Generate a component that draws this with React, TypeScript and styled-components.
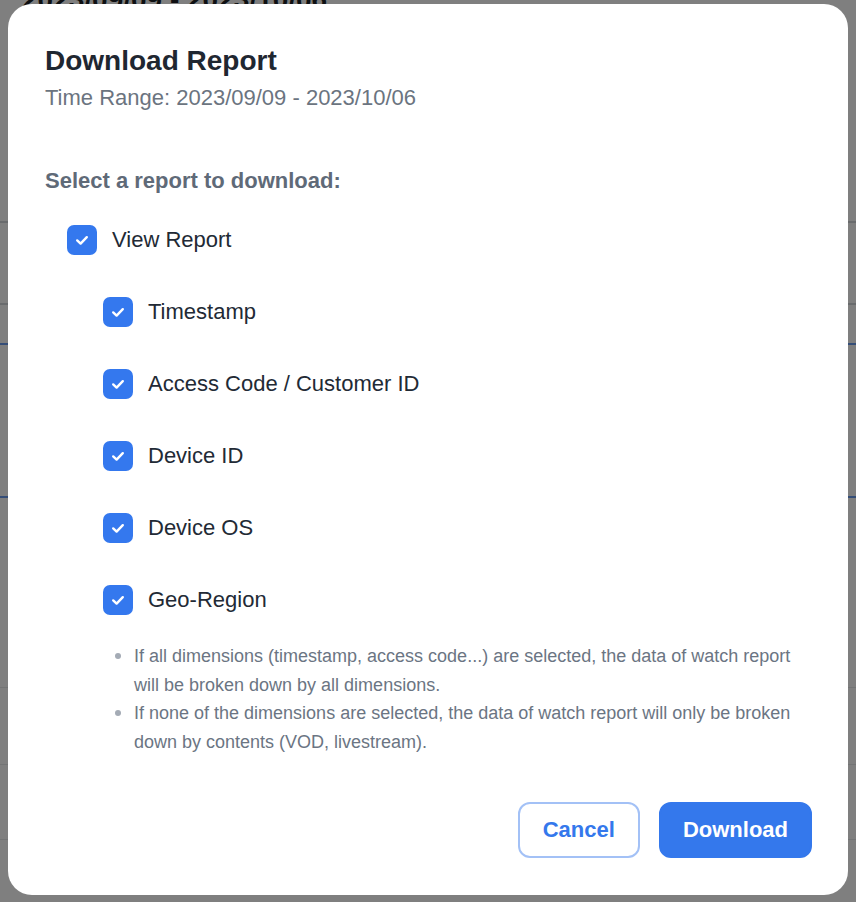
import React from "react";
import styled, { createGlobalStyle } from "styled-components";

const GlobalStyle = createGlobalStyle`
  * { box-sizing: border-box; }
  html, body { margin: 0; padding: 0; }
  body {
    font-family: "Liberation Sans", Arial, Helvetica, sans-serif;
    background: #ffffff;
  }
`;

/* ---------- background page (dimmed by the overlay) ---------- */

const Page = styled.div`
  height: 902px;
  overflow: hidden;
  background: #ffffff;
  display: flex;
  flex-direction: column;
`;

const Header = styled.header`
  height: 223px;
  border-bottom: 2px solid #d3d6db;
  padding-left: 22px;
`;

const DateText = styled.div`
  margin-top: -17px;
  font-size: 28px;
  font-weight: 700;
  line-height: 34px;
  color: #1b1f24;
`;

const FilterBar = styled.div`
  height: 82px;
  border-bottom: 2px solid #d3d6db;
`;

const ChartSection = styled.section`
  margin-top: 38px;
  height: 155px;
  display: flex;
`;

const ChartMain = styled.div`
  flex: 1;
  border-top: 2px solid #6b9cf0;
  border-bottom: 2px solid #6b9cf0;
`;

const TableRow = styled.div<{ $h: number }>`
  height: ${(p) => p.$h}px;
  border-bottom: 1px solid #e6e8eb;
`;

/* ---------- modal ---------- */

const Overlay = styled.div`
  position: fixed;
  inset: 0;
  background: rgba(0, 0, 0, 0.5);
  display: flex;
  justify-content: center;
  align-items: flex-start;
  padding-top: 4px;
`;

const Modal = styled.div`
  width: 840px;
  background: #ffffff;
  border-radius: 24px;
  padding: 40px 36px 37px 37px;
  display: flex;
  flex-direction: column;
`;

const Title = styled.h2`
  margin: 0;
  font-size: 28px;
  line-height: 34px;
  font-weight: 700;
  color: #1f2731;
`;

const Subtitle = styled.div`
  margin-top: 5px;
  font-size: 22px;
  line-height: 30px;
  color: #6b7480;
`;

const SectionLabel = styled.div`
  margin-top: 53px;
  font-size: 22px;
  line-height: 30px;
  font-weight: 700;
  color: #5f6a78;
`;

const OptionList = styled.div`
  margin-top: 29px;
  display: flex;
  flex-direction: column;
  gap: 42px;
`;

const OptionRow = styled.label<{ $indent: number }>`
  display: flex;
  align-items: center;
  gap: 15px;
  padding-left: ${(p) => p.$indent}px;
  font-size: 22px;
  line-height: 30px;
  color: #222a35;
  cursor: pointer;
`;

const Box = styled.span`
  width: 30px;
  height: 30px;
  flex: none;
  border-radius: 7px;
  background: #3478ee;
  display: flex;
  align-items: center;
  justify-content: center;
`;

const Notes = styled.ul`
  margin: 27px 0 0 0;
  padding: 0 0 0 70px;
  list-style: none;
  display: flex;
  flex-direction: column;
`;

const Note = styled.li`
  display: flex;
  align-items: flex-start;
  gap: 13px;
  font-size: 18px;
  line-height: 28.5px;
  color: #6b7583;
`;

const Dot = styled.span`
  width: 6px;
  height: 6px;
  flex: none;
  margin-top: 11px;
  border-radius: 50%;
  background: #a4abb5;
`;

const Footer = styled.div`
  margin-top: 46px;
  display: flex;
  justify-content: flex-end;
  gap: 19px;
`;

const Button = styled.button<{ $primary?: boolean }>`
  height: 56px;
  padding: 0 ${(p) => (p.$primary ? 22 : 23)}px;
  border-radius: 12px;
  font-family: inherit;
  font-size: 22px;
  font-weight: 700;
  cursor: pointer;
  border: 2px solid ${(p) => (p.$primary ? "#3478ec" : "#a3c1f6")};
  background: ${(p) => (p.$primary ? "#3478ec" : "#ffffff")};
  color: ${(p) => (p.$primary ? "#ffffff" : "#3478ec")};
`;

const Check = () => (
  <svg width="30" height="30" viewBox="0 0 30 30" fill="none">
    <path
      d="M10.2 15.4 L13.6 18.6 L19.8 12.2"
      stroke="#ffffff"
      strokeWidth="2.4"
      strokeLinecap="round"
      strokeLinejoin="round"
    />
  </svg>
);

const Option = ({ label, indent }: { label: string; indent: number }) => (
  <OptionRow $indent={indent}>
    <Box>
      <Check />
    </Box>
    {label}
  </OptionRow>
);

const dimensions = [
  "Timestamp",
  "Access Code / Customer ID",
  "Device ID",
  "Device OS",
  "Geo-Region",
];

export default function App() {
  return (
    <>
      <GlobalStyle />
      <Page>
        <Header>
          <DateText>2023/09/09 - 2023/10/06</DateText>
        </Header>
        <FilterBar />
        <ChartSection>
          <ChartMain />
        </ChartSection>
        <TableRow $h={190} />
        <TableRow $h={77} />
        <TableRow $h={75} />
      </Page>
      <Overlay>
        <Modal role="dialog" aria-label="Download Report">
          <Title>Download Report</Title>
          <Subtitle>Time Range: 2023/09/09 - 2023/10/06</Subtitle>
          <SectionLabel>Select a report to download:</SectionLabel>
          <OptionList>
            <Option label="View Report" indent={22} />
            {dimensions.map((d) => (
              <Option key={d} label={d} indent={58} />
            ))}
          </OptionList>
          <Notes>
            <Note>
              <Dot />
              <span>
                If all dimensions (timestamp, access code...) are selected, the
                data of watch report will be broken down by all dimensions.
              </span>
            </Note>
            <Note>
              <Dot />
              <span>
                If none of the dimensions are selected, the data of watch report
                will only be broken down by contents (VOD, livestream).
              </span>
            </Note>
          </Notes>
          <Footer>
            <Button>Cancel</Button>
            <Button $primary>Download</Button>
          </Footer>
        </Modal>
      </Overlay>
    </>
  );
}
